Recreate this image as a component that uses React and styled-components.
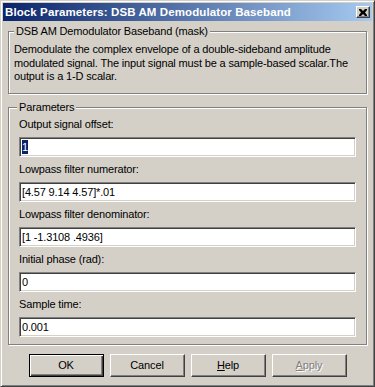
import React from "react";
import styled, { createGlobalStyle } from "styled-components";

const GlobalStyle = createGlobalStyle`
  html, body {
    margin: 0;
    padding: 0;
    background: #d4d0c8;
  }
  * {
    box-sizing: border-box;
  }
`;

const Window = styled.div`
  width: 375px;
  height: 387px;
  background: #d4d0c8;
  border: 1px solid;
  border-color: #d4d0c8 #404040 #404040 #d4d0c8;
  box-shadow: inset 1px 1px 0 #fff, inset -1px -1px 0 #808080;
  padding: 2px;
  display: flex;
  flex-direction: column;
  font-family: "Liberation Sans", Arial, sans-serif;
  font-size: 11px;
  letter-spacing: -0.15px;
  color: #000;
`;

const TitleBar = styled.div`
  height: 18px;
  display: flex;
  align-items: center;
  justify-content: space-between;
  padding: 0 2px 0 2px;
  background: linear-gradient(to right, #0a246a, #a6caf0);
`;

const Title = styled.span`
  color: #fff;
  font-weight: bold;
  font-size: 11.5px;
  letter-spacing: 0.1px;
  white-space: nowrap;
`;

const CloseButton = styled.div`
  width: 14px;
  height: 12px;
  background: #d4d0c8;
  border: 1px solid;
  border-color: #fff #404040 #404040 #fff;
  box-shadow: inset -1px -1px 0 #808080;
  display: flex;
  align-items: center;
  justify-content: center;
`;

const Body = styled.div`
  flex: 1;
  display: flex;
  flex-direction: column;
  padding: 4px 5px 0 5px;
`;

const GroupBox = styled.fieldset`
  margin: 0 0 ${(p) => p.$gap || 0}px 0;
  padding: ${(p) => p.$pad};
  border: 1px solid #808080;
  box-shadow: inset 1px 1px 0 #fff, 1px 1px 0 #fff;
  min-width: 0;
`;

const Legend = styled.legend`
  padding: 0 2px;
  margin-left: ${(p) => p.$shift || 0}px;
  line-height: 13px;
  background: #d4d0c8;
`;

const Description = styled.p`
  margin: 0;
  line-height: 13.5px;
`;

const Field = styled.div`
  display: flex;
  flex-direction: column;
  margin-bottom: ${(p) => (p.$last ? 0 : 6)}px;
`;

const Label = styled.div`
  line-height: 13px;
  margin-bottom: 6px;
  white-space: nowrap;
`;

const TextBox = styled.div`
  height: 20px;
  background: #fff;
  border: 1px solid;
  border-color: #808080 #fff #fff #808080;
  box-shadow: inset 1px 1px 0 #404040, inset -1px -1px 0 #d4d0c8;
  padding: 0 2px;
  display: flex;
  align-items: center;
  white-space: nowrap;
`;

const Selected = styled.span`
  background: #0a246a;
  color: #fff;
  line-height: 14px;
`;

const ButtonRow = styled.div`
  display: flex;
  justify-content: center;
  gap: 6px;
  margin-top: 9px;
`;

const Button = styled.div`
  width: 75px;
  height: 23px;
  display: flex;
  align-items: center;
  justify-content: center;
  background: #d4d0c8;
  border: 1px solid;
  border-color: ${(p) => (p.$default ? "#000" : "#fff #404040 #404040 #fff")};
  box-shadow: ${(p) =>
    p.$default
      ? "inset 1px 1px 0 #fff, inset -1px -1px 0 #404040, inset -2px -2px 0 #808080"
      : "inset -1px -1px 0 #808080"};
  color: ${(p) => (p.$disabled ? "#808080" : "#000")};
  text-shadow: ${(p) => (p.$disabled ? "1px 1px 0 #fff" : "none")};
`;

const Mnemonic = styled.span`
  text-decoration: underline;
`;

const fields = [
  { label: "Output signal offset:", value: "1", selected: true },
  { label: "Lowpass filter numerator:", value: "[4.57 9.14 4.57]*.01" },
  { label: "Lowpass filter denominator:", value: "[1 -1.3108 .4936]" },
  { label: "Initial phase (rad):", value: "0" },
  { label: "Sample time:", value: "0.001" },
];

export default function App() {
  return (
    <>
      <GlobalStyle />
      <Window>
        <TitleBar>
          <Title>Block Parameters: DSB AM Demodulator Baseband</Title>
          <CloseButton>
            <svg width="8" height="7" viewBox="0 0 8 7">
              <path
                d="M0 0h2l2 2 2-2h2v1L6 3.5 8 6v1H6L4 5 2 7H0V6l2-2.5L0 1z"
                fill="#000"
              />
            </svg>
          </CloseButton>
        </TitleBar>
        <Body>
          <GroupBox $pad="5px 5px 9px 5px" $gap={7}>
            <Legend>DSB AM Demodulator Baseband (mask)</Legend>
            <Description>
              Demodulate the complex envelope of a double-sideband amplitude
              modulated signal. The input signal must be a sample-based
              scalar.The output is a 1-D scalar.
            </Description>
          </GroupBox>
          <GroupBox $pad="4px 10px 7px 10px">
            <Legend $shift={-2}>Parameters</Legend>
            {fields.map((f, i) => (
              <Field key={f.label} $last={i === fields.length - 1}>
                <Label>{f.label}</Label>
                <TextBox>
                  {f.selected ? <Selected>{f.value}</Selected> : f.value}
                </TextBox>
              </Field>
            ))}
          </GroupBox>
          <ButtonRow>
            <Button $default>OK</Button>
            <Button>Cancel</Button>
            <Button>
              <Mnemonic>H</Mnemonic>elp
            </Button>
            <Button $disabled>
              <Mnemonic>A</Mnemonic>pply
            </Button>
          </ButtonRow>
        </Body>
      </Window>
    </>
  );
}
